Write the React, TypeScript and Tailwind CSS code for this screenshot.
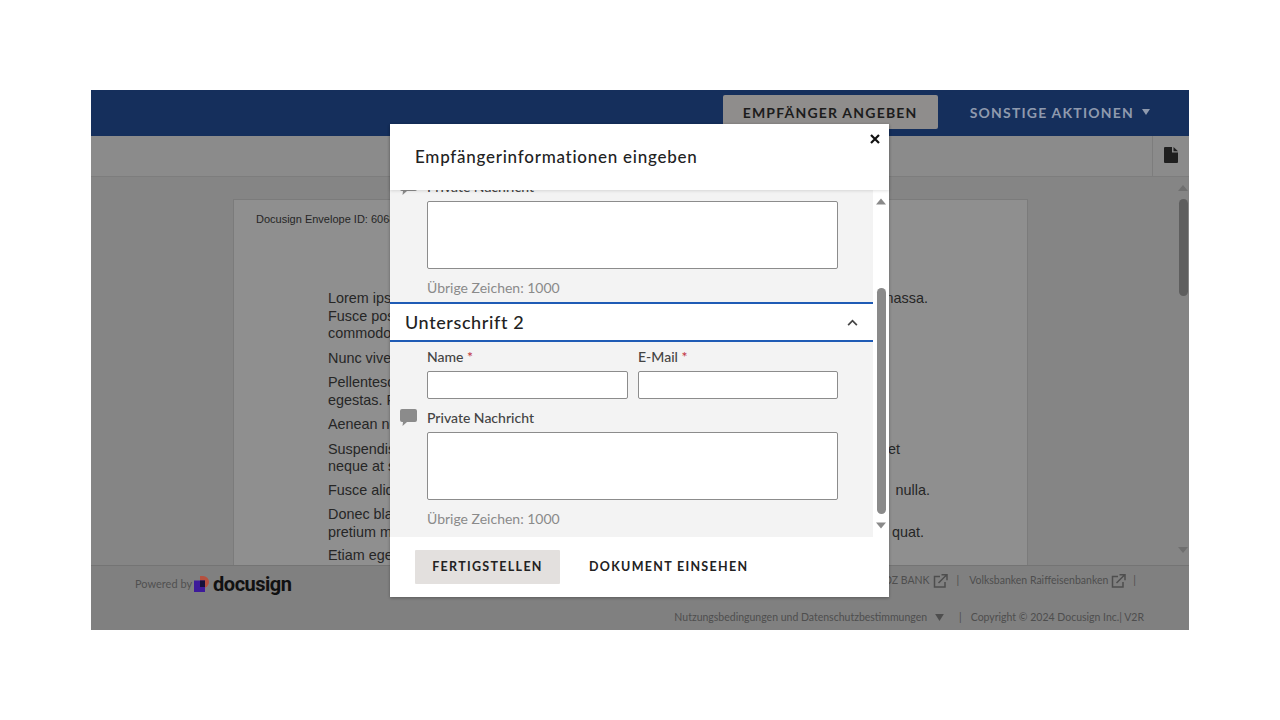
import React from "react";

const ui = { fontFamily: "Lato, 'Noto Sans', sans-serif" };
const doc = { fontFamily: "'Liberation Sans', Arial, sans-serif" };

function DocLine({ left, right, w }: { left: string; right?: string; w: string }) {
  return (
    <div className={`flex justify-between whitespace-nowrap h-[17.5px] leading-[17.5px] ${w}`}>
      <span>{left}</span>
      {right && <span>{right}</span>}
    </div>
  );
}

function ChatIcon({ className }: { className?: string }) {
  return (
    <svg viewBox="0 0 17 17" className={className} fill="#8b8b8b">
      <path d="M2 0h13a2 2 0 0 1 2 2v9a2 2 0 0 1-2 2H7l-4.5 4 .5-4H2a2 2 0 0 1-2-2V2a2 2 0 0 1 2-2z" />
    </svg>
  );
}

function ExtIcon() {
  return (
    <svg viewBox="0 0 15 14" className="w-[15px] h-[14px]" fill="none" stroke="#4e4e4e" strokeWidth="1.5">
      <path d="M7 2.5H1.5v10.5h10.5V8" />
      <path d="M5.5 9 13.5 1M8.5 .8h5.5v5.5" />
    </svg>
  );
}

function MessageBlock() {
  return (
    <div className="relative h-[117px]">
      <ChatIcon className="absolute left-[10px] top-[-9px] w-[17px] h-[17px]" />
      <div className="pl-[37px] h-[14px] text-[14px] leading-[14px] font-medium text-[#444] -translate-y-[7px]">Private Nachricht</div>
      <textarea
        readOnly
        className="block ml-[37px] w-[411px] h-[68px] bg-white border border-[#8c8c8c] rounded-[2px] resize-none"
      />
      <div className="pl-[37px] mt-[10px] text-[14px] leading-[18px] text-[#8a8a8a]">Übrige Zeichen: 1000</div>
    </div>
  );
}

export default function App() {
  return (
    <div className="relative w-[1280px] h-[720px] bg-white overflow-hidden pt-[90px] pl-[91px]" style={ui}>
      <div className="w-[1098px] h-[540px] flex flex-col bg-[#8a8a8a]">
        {/* Top bar */}
        <header className="h-[46px] bg-[#152f5c] flex items-start justify-end shrink-0">
          <div className="mt-[5px] w-[215px] h-[34px] bg-[#8f8d8c] rounded-[2px] flex items-center justify-center text-[14px] font-bold tracking-[1.2px] text-[#1c1c1c]">
            EMPFÄNGER ANGEBEN
          </div>
          <div className="ml-[32px] mr-[39px] h-[44px] flex items-center gap-[8px] text-[14px] font-bold tracking-[1.2px] text-[#8f9aae]">
            SONSTIGE AKTIONEN
            <svg viewBox="0 0 8 6" className="w-[8px] h-[6px]" fill="#8f9aae"><path d="M0 0h8L4 6z" /></svg>
          </div>
        </header>
        {/* Toolbar */}
        <div className="h-[41px] shrink-0 flex justify-end bg-[#8b8b8b] border-b border-[#7d7d7d]">
          <div className="w-[37px] border-l border-[#7d7d7d] flex items-center justify-center">
            <svg viewBox="0 0 14 16" className="w-[14px] h-[16px] -mt-[2px]" fill="#1f1f1f">
              <path d="M1 0h7v5.5h6V15a1 1 0 0 1-1 1H1a1 1 0 0 1-1-1V1a1 1 0 0 1 1-1z" />
              <path d="M9.5 0 14 4.2H9.5z" />
            </svg>
          </div>
        </div>
        {/* Document viewer */}
        <div className="h-[389px] shrink-0 flex bg-[#858585] border-b border-[#747474] overflow-hidden">
          <div className="w-[1086px] pl-[142px] pt-[22px] overflow-hidden">
            <div className="w-[795px] h-[400px] bg-[#8f8f8f] border border-[#7b7b7b] text-[#262626]" style={doc}>
              <div className="pl-[22px] pt-[13px] text-[11px] leading-[13px]">Docusign Envelope ID: 6068</div>
              <div className="pl-[94px] pt-[64px] text-[14.4px]">
                <DocLine w="w-[600px]" left="Lorem ipsum dolor sit amet" right="massa." />
                <DocLine w="w-[300px]" left="Fusce posuere" />
                <DocLine w="w-[300px]" left="commodo ligula" />
                <div className="mt-[7px]"><DocLine w="w-[300px]" left="Nunc viverra" /></div>
                <div className="mt-[7px]"><DocLine w="w-[300px]" left="Pellentesque" /></div>
                <DocLine w="w-[300px]" left="egestas. Proin" />
                <div className="mt-[7px]"><DocLine w="w-[300px]" left="Aenean nec" /></div>
                <div className="mt-[7px]"><DocLine w="w-[572px]" left="Suspendisse" right="et" /></div>
                <DocLine w="w-[300px]" left="neque at sem" />
                <div className="mt-[6px]"><DocLine w="w-[602px]" left="Fusce aliquet" right="nulla." /></div>
                <div className="mt-[7px]"><DocLine w="w-[300px]" left="Donec blandit" /></div>
                <DocLine w="w-[596px]" left="pretium mauris" right="quat." />
                <div className="mt-[6px]"><DocLine w="w-[300px]" left="Etiam eget" /></div>
              </div>
            </div>
          </div>
          {/* Page scrollbar */}
          <div className="w-[12px] flex flex-col items-center pt-[8px]">
            <svg viewBox="0 0 10 6" className="w-[10px] h-[6px]" fill="#6f6f6f"><path d="M5 0l5 6H0z" /></svg>
            <div className="mt-[8px] w-[9px] h-[97px] rounded-[5px] bg-[#5e5e5e]" />
            <svg viewBox="0 0 10 6" className="mt-[251px] w-[10px] h-[6px]" fill="#6f6f6f"><path d="M0 0h10L5 6z" /></svg>
          </div>
        </div>
        {/* Footer */}
        <footer className="h-[64px] bg-[#808080] relative">
          <div className="flex items-start justify-between">
            <div className="ml-[44px] mt-[6px] flex items-center text-[11px] text-[#505050]">
              <span>Powered by</span>
              <svg viewBox="0 0 15 17" className="ml-[2px] w-[15px] h-[17px]">
                <path d="M6 0h3a6 6 0 0 1 0 12H6z" fill="#b5503f" />
                <rect x="0" y="4.5" width="11" height="11.5" fill="#3d1a9a" />
                <rect x="6" y="4.5" width="5" height="6.5" fill="#15103a" />
              </svg>
              <span className="ml-[4px] text-[20px] leading-[24px] font-bold tracking-[-0.5px] text-[#111]" style={{ fontFamily: "Roboto, sans-serif" }}>docusign</span>
            </div>
            <div className="mr-[53px] mt-[7px] flex items-center text-[10.5px] text-[#4e4e4e]">
              <span>DZ BANK</span>
              <span className="ml-[3px]"><ExtIcon /></span>
              <span className="ml-[9px]">|</span>
              <span className="ml-[10px]">Volksbanken Raiffeisenbanken</span>
              <span className="ml-[3px]"><ExtIcon /></span>
              <span className="ml-[7px]">|</span>
            </div>
          </div>
          <div className="absolute right-[45px] top-[44px] flex items-center text-[10.5px] text-[#4e4e4e]">
            <span>Nutzungsbedingungen und Datenschutzbestimmungen</span>
            <svg viewBox="0 0 10 8" className="ml-[8px] w-[9px] h-[7px]" fill="#4e4e4e"><path d="M0 0h10L5 8z" /></svg>
            <span className="ml-[15px]">|</span>
            <span className="ml-[9px]">Copyright © 2024 Docusign Inc.| V2R</span>
          </div>
        </footer>
      </div>

      {/* Modal */}
      <div className="absolute left-[390px] top-[124px] w-[499px] h-[473px] bg-white flex flex-col shadow-[0_1px_3px_rgba(0,0,0,0.3)]">
        <div className="relative z-10 h-[66px] shrink-0 bg-white shadow-[0_1px_3px_rgba(0,0,0,0.12)]">
          <svg viewBox="0 0 10 10" className="absolute left-[480px] top-[10px] w-[10px] h-[10px]" stroke="#111" strokeWidth="2.2" fill="none">
            <path d="M1 1l8 8M9 1l-8 8" />
          </svg>
          <div className="pl-[25px] pt-[21px] text-[17px] leading-[24px] font-medium tracking-[0.75px] text-[#222]">Empfängerinformationen eingeben</div>
        </div>
        <div className="h-[347px] flex shrink-0">
          <div className="w-[483px] bg-[#f3f3f3] overflow-hidden">
            <div className="-mt-[3px]">
              <MessageBlock />
              <div className="h-[40px] bg-white border-y-2 border-[#1f5bb5] -mt-[2px] flex items-center justify-between pl-[15px] pr-[15px]">
                <span className="text-[18px] font-medium tracking-[0.6px] text-[#222]">Unterschrift 2</span>
                <svg viewBox="0 0 12 8" className="w-[11px] h-[7px]" fill="none" stroke="#444" strokeWidth="2"><path d="M1 7l5-5 5 5" /></svg>
              </div>
              <div className="flex pl-[37px] gap-[10px] pt-[7px]">
                <div className="w-[201px]">
                  <div className="text-[14px] leading-[16px] font-medium text-[#444]">Name <span className="text-[#c0303a]">*</span></div>
                  <input readOnly className="block mt-[6px] w-full h-[28px] bg-white border border-[#8c8c8c] rounded-[2px]" />
                </div>
                <div className="w-[200px]">
                  <div className="text-[14px] leading-[16px] font-medium text-[#444]">E-Mail <span className="text-[#c0303a]">*</span></div>
                  <input readOnly className="block mt-[6px] w-full h-[28px] bg-white border border-[#8c8c8c] rounded-[2px]" />
                </div>
              </div>
              <div className="mt-[19px]"><MessageBlock /></div>
            </div>
          </div>
          <div className="w-[16px] bg-white flex flex-col items-center pt-[8px]">
            <svg viewBox="0 0 10 6" className="w-[10px] h-[7px]" fill="#8a8a8a"><path d="M5 0l5 6H0z" /></svg>
            <div className="mt-[83px] w-[9px] h-[226px] rounded-[5px] bg-[#8a8a8a]" />
            <svg viewBox="0 0 10 6" className="mt-[8px] w-[10px] h-[7px]" fill="#8a8a8a"><path d="M0 0h10L5 6z" /></svg>
          </div>
        </div>
        <div className="flex-1 flex items-center pl-[25px] pt-[0px]">
          <div className="w-[145px] h-[34px] bg-[#e3e0de] rounded-[1px] flex items-center justify-center text-[12.5px] font-bold tracking-[1.3px] text-[#222]">FERTIGSTELLEN</div>
          <div className="ml-[29px] text-[12.5px] font-bold tracking-[1.3px] text-[#222]">DOKUMENT EINSEHEN</div>
        </div>
      </div>
    </div>
  );
}
